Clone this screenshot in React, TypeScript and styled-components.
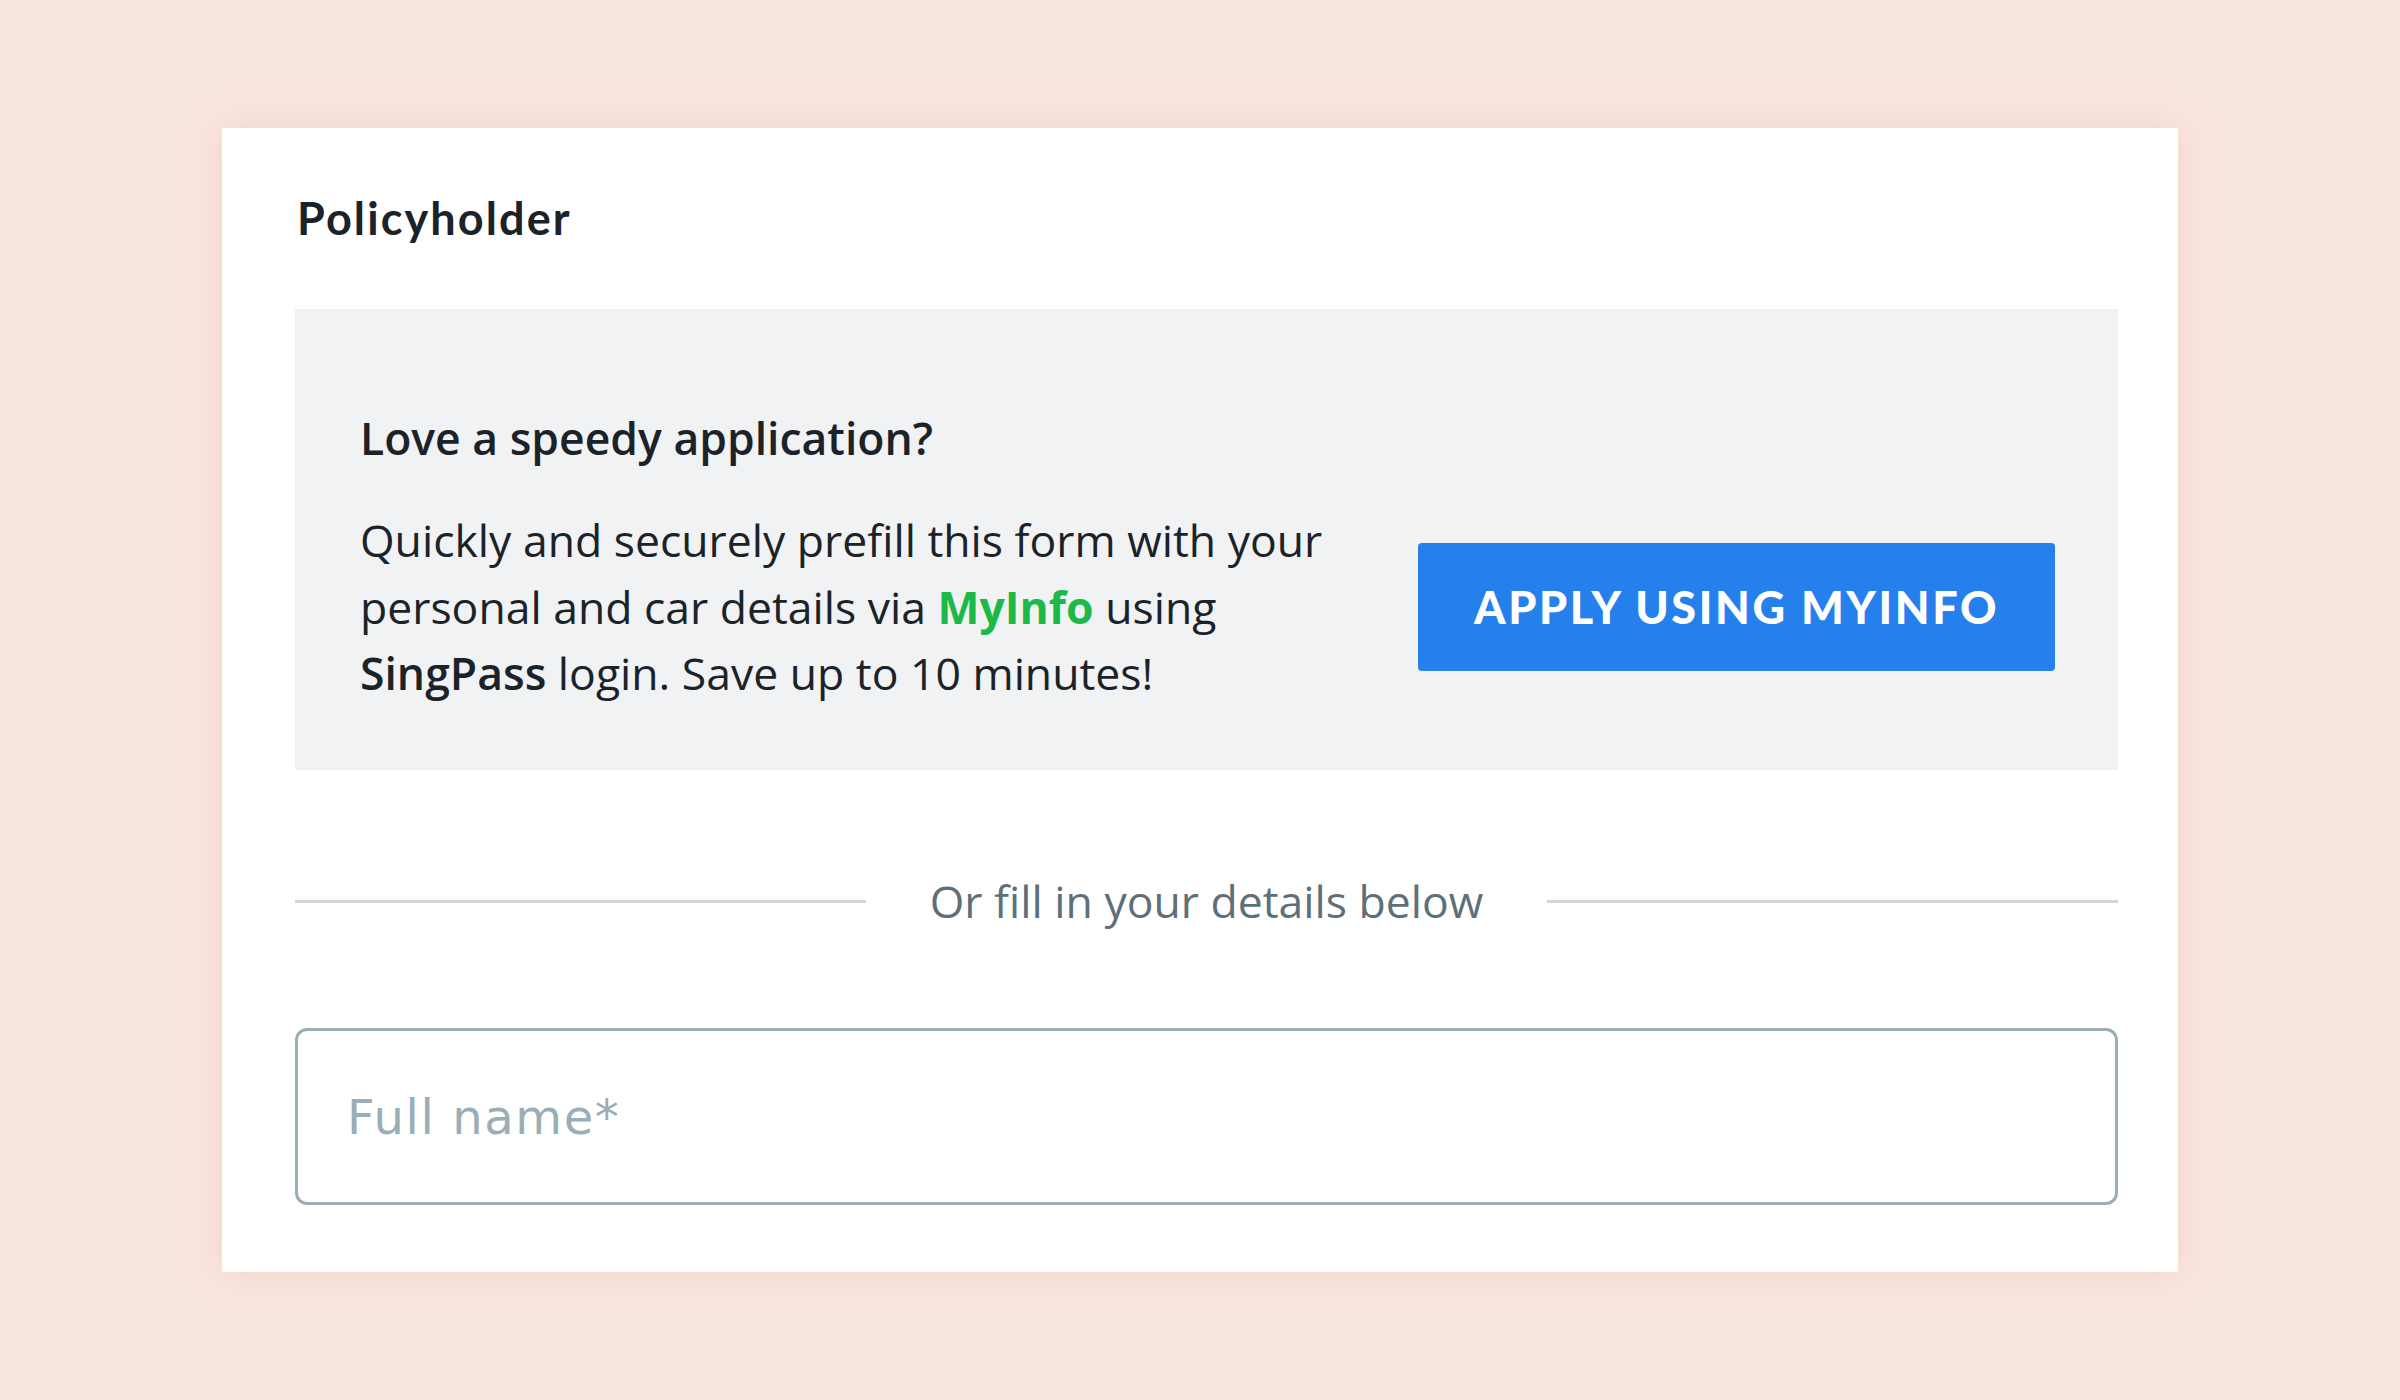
import React from "react";
import styled, { createGlobalStyle } from "styled-components";

const GlobalStyle = createGlobalStyle`
  html, body {
    margin: 0;
    padding: 0;
    background: #fae6e0;
  }
  body {
    font-family: "Open Sans", "Liberation Sans", sans-serif;
  }
  * { box-sizing: border-box; }
`;

const Page = styled.div`
  min-height: 1400px;
  padding: 128px 0 0 222px;
`;

const Card = styled.section`
  width: 1956px;
  height: 1144px;
  background: #ffffff;
  padding: 67px 60px 67px 73px;
  box-shadow: 0 0 36px rgba(215, 160, 145, 0.28);
  display: flex;
  flex-direction: column;
`;

const Title = styled.h2`
  margin: 0 0 68px 2px;
  font-family: Lato, "Open Sans", sans-serif;
  font-weight: 700;
  font-size: 45px;
  line-height: 46px;
  letter-spacing: 2.1px;
  color: #1b2329;
`;

const Promo = styled.div`
  background: #f1f2f4;
  padding: 99px 63px 62px 65px;
  height: 461px;
`;

const PromoHeading = styled.h3`
  margin: 0 0 40px;
  font-family: "Open Sans", sans-serif;
  font-weight: 600;
  font-size: 44.5px;
  line-height: 59px;
  color: #1b2329;
`;

const PromoRow = styled.div`
  display: flex;
  align-items: center;
  justify-content: space-between;
`;

const PromoText = styled.p`
  margin: 0;
  width: 1010px;
  font-family: "Open Sans", sans-serif;
  font-weight: 400;
  font-size: 44.5px;
  line-height: 66.5px;
  color: #1b2329;
`;

const Strong = styled.strong<{ $green?: boolean }>`
  font-weight: ${(p) => (p.$green ? 700 : 600)};
  color: ${(p) => (p.$green ? "#1db948" : "#1b2329")};
`;

const ApplyButton = styled.button`
  width: 637px;
  height: 128px;
  flex: none;
  border: none;
  border-radius: 4px;
  background: #2580ec;
  color: #ffffff;
  font-family: Lato, "Open Sans", sans-serif;
  font-weight: 900;
  font-size: 45px;
  letter-spacing: 2.6px;
  padding: 0;
  cursor: pointer;
`;

const Divider = styled.div`
  display: flex;
  align-items: center;
  margin-top: 104px;
`;

const Rule = styled.span`
  flex: 1;
  height: 3px;
  background: #cfd7dc;
`;

const DividerText = styled.span`
  margin: 0 64px;
  font-family: "Open Sans", sans-serif;
  font-size: 44.5px;
  line-height: 54px;
  color: #5e6f79;
`;

const NameInput = styled.input`
  margin-top: 100px;
  width: 100%;
  height: 177px;
  border: 3px solid #9badb6;
  border-radius: 12px;
  background: #ffffff;
  padding: 0 0 0 49px;
  font-family: "DejaVu Sans", Verdana, sans-serif;
  font-size: 48px;
  letter-spacing: 1.6px;
  color: #1b2329;
  outline: none;

  &::placeholder {
    color: #9badb6;
  }
`;

export default function App() {
  return (
    <>
      <GlobalStyle />
      <Page>
        <Card>
          <Title>Policyholder</Title>
          <Promo>
            <PromoHeading>Love a speedy application?</PromoHeading>
            <PromoRow>
              <PromoText>
                Quickly and securely prefill this form with your personal and
                car details via <Strong $green>MyInfo</Strong> using{" "}
                <Strong>SingPass</Strong> login. Save up to 10 minutes!
              </PromoText>
              <ApplyButton>APPLY USING MYINFO</ApplyButton>
            </PromoRow>
          </Promo>
          <Divider>
            <Rule />
            <DividerText>Or fill in your details below</DividerText>
            <Rule />
          </Divider>
          <NameInput placeholder="Full name*" />
        </Card>
      </Page>
    </>
  );
}
